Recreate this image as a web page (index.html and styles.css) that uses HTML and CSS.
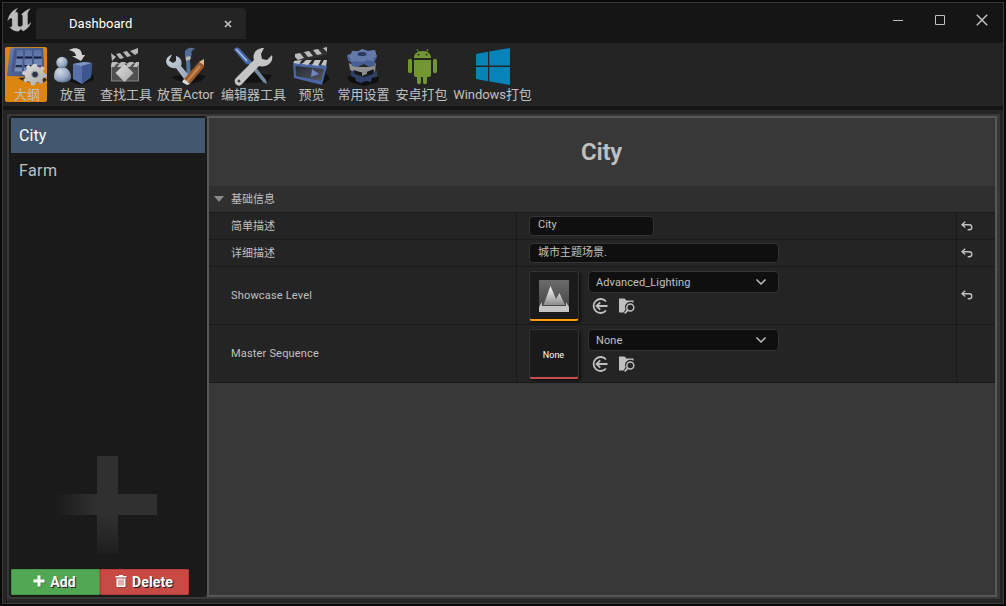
FILE: index.html
```
<!DOCTYPE html>
<html lang="zh-CN">
<head>
<meta charset="utf-8">
<title>Dashboard</title>
<link rel="stylesheet" href="styles.css">
</head>
<body>
<svg width="0" height="0" class="defs">
  <defs>
    <linearGradient id="blue" x1="0" y1="0" x2="1" y2="1"><stop offset="0" stop-color="#6d83b5"/><stop offset="1" stop-color="#344675"/></linearGradient>
    <linearGradient id="cell" x1="0" y1="0" x2="0" y2="1"><stop offset="0" stop-color="#5a70a3"/><stop offset="1" stop-color="#7c90ba"/></linearGradient>
    <linearGradient id="silver" x1="0" y1="0" x2="1" y2="1"><stop offset="0" stop-color="#dedede"/><stop offset="1" stop-color="#a8a8a8"/></linearGradient>
    <linearGradient id="steel" x1="0" y1="0" x2="1" y2="1"><stop offset="0" stop-color="#cbd2d9"/><stop offset="1" stop-color="#8fa0b8"/></linearGradient>
    <radialGradient id="ball" cx=".35" cy=".3" r=".8"><stop offset="0" stop-color="#d0d8e2"/><stop offset=".6" stop-color="#98aac3"/><stop offset="1" stop-color="#566d90"/></radialGradient>
    <linearGradient id="plusfade" gradientUnits="userSpaceOnUse" x1="18" y1="66" x2="50" y2="34"><stop offset="0" stop-color="#1c1c1c"/><stop offset="1" stop-color="#303030"/></linearGradient>
    <linearGradient id="plusleg" x1="0" y1="0" x2="0" y2="1"><stop offset="0" stop-color="#303030"/><stop offset="1" stop-color="#1e1e1e"/></linearGradient>
    <linearGradient id="plusarm" x1="0" y1="0" x2="1" y2="0"><stop offset="0" stop-color="#1b1b1b"/><stop offset="1" stop-color="#303030"/></linearGradient>
    <linearGradient id="thumb" x1="0" y1="0" x2="0" y2="1"><stop offset="0" stop-color="#6b6b6b"/><stop offset="1" stop-color="#3f3f3f"/></linearGradient>
    <linearGradient id="screen" x1="0" y1="0" x2="1" y2="1"><stop offset="0" stop-color="#252a33"/><stop offset="1" stop-color="#515660"/></linearGradient>
    <linearGradient id="peak" x1="0" y1="0" x2="0" y2="1"><stop offset="0" stop-color="#fff"/><stop offset="1" stop-color="#8c8c8c"/></linearGradient>
    <symbol id="undo" viewBox="0 0 12 10"><path d="M4.200.8 1 3.700l3.200 2.800M1.300 3.700h7a2.400 2.400 0 0 1 0 5H6.700" fill="none" stroke="#c0c0c0" stroke-width="1.350"/></symbol>
    <symbol id="chev" viewBox="0 0 12 8"><path d="M1.500 1.500 6 6l4.500-4.500" fill="none" stroke="#c0c0c0" stroke-width="1.500"/></symbol>
    <symbol id="use" viewBox="0 0 16 16"><path d="M14 3.500A7 7 0 1 0 14 12.500M15.500 8H4.500M8.200 4.300 4.500 8l3.700 3.700" fill="none" stroke="#c0c0c0" stroke-width="1.800"/></symbol>
    <symbol id="browse" viewBox="0 0 17 16"><path d="M1 .5h5.500l2 2H15.500v2.300a5.300 5.300 0 0 0-7.900 6.500L5.500 14.500H1z" fill="#c0c0c0"/><circle cx="12.300" cy="9.500" r="3.500" fill="none" stroke="#c0c0c0" stroke-width="1.500"/><path d="m9.700 12.200-3 3.200" stroke="#c0c0c0" stroke-width="1.800"/></symbol>
  </defs>
</svg>
<div class="window">
  <header class="titlebar">
    <svg class="logo" viewBox="0 0 24 24" width="24" height="24"><path d="M10.500.5C5.500 2.200 2 6.500.8 12.500c1.200-1.700 2.400-2.500 3.400-2.500.8 0 1 .5 1 1.500v6.500c0 1-1 1.500-2.500 1 2 2.800 5 4.300 8.800 4.300l2.500-2.500 2 2.200c3.800-1.700 6.800-4.700 7.800-8.500-1.500 2-2.700 2.700-3.300 2.300V6c.2-2 1.300-3.700 2.700-5.200-3.400.9-6 3-8.700 5.700 1 .5 1.300 1 1.300 2V17c-1 1.300-1.800 1.800-3 1.800-1.500 0-2.100-.8-2.100-2.300v-11C10.700 4 9.500 3.700 8 5c.5-2 1.200-3.200 2.500-4.500z" fill="#bcbcbc" stroke="#bcbcbc" stroke-width=".4"/></svg>
    <div class="tab"><span>Dashboard</span><svg width="8" height="8" viewBox="0 0 8 8"><path d="m1 1 6 6m0-6L1 7" stroke="#c0c0c0" stroke-width="1.700"/></svg></div>
    <div class="controls">
      <svg width="12" height="12" viewBox="0 0 12 12"><path d="M1 6.500h10" stroke="#c0c0c0"/></svg>
      <svg width="12" height="12" viewBox="0 0 12 12"><path d="M1.500 1.500h9v9h-9z" fill="none" stroke="#c0c0c0"/></svg>
      <svg width="12" height="12" viewBox="0 0 12 12"><path d="m.8.800 10.400 10.400m0-10.400L.8 11.200" stroke="#c0c0c0" stroke-width="1.500"/></svg>
    </div>
  </header>

  <nav class="toolbar">
    <div class="tool active">
      <svg viewBox="0 0 44 40"><path d="m14 31 25-2 4 4-4 3-18-1z" fill="#3c2a10"/><path d="m6 1.500 4-1L39 1l1 22-4 7-33-1z" fill="url(#blue)"/><path d="M10 1.500 39 1l1 25-33-1z" fill="#465a8b"/><g fill="url(#cell)"><path d="M13 3h6v6h-6.500zM21 3h7v6h-7zM30 3h7l.5 6H30zM12 12h6.500v6h-7zM20.500 12h7.500v6h-7.500zM30 12h8v6h-8zM11 20.500h7v4h-7.500zM20 20.500h8v4h-8z"/></g><path d="M13 10.500h6M21 10.500h7M30 10.500h7.500M12 19h6M20.500 19h7" stroke="#151b35" stroke-width="1.400"/><g transform="translate(31 26.500)"><path d="m-2-11 4 0 .8 3 3 1.200 3-1.800L11.500-6l-1.700 3L11 0l3 .9-.4 3.500-3.600.4-1.500 2.500 1.300 3-3 2-2.800-2.200-3 .8L-.5 14h-4L-5 10.500l-3-1.500-3.500 1.600-2.300-3.100 2.600-2.600-.7-3-3.100-1 .6-3.500 3.300 0 1.800-2.700-1-3.200 3-1.600 2.300 2.200z" transform="scale(.86)" fill="url(#silver)"/><circle cx="0" cy="1" r="3.300" fill="#2b3347" stroke="#9a9a9a"/></g></svg>
      <span>大纲</span>
    </div>
    <div class="tool">
      <svg viewBox="0 0 44 40"><path d="m15 33 15 5 13-5-1-6z" fill="#111"/><path d="M3 30c0-7 3-10 8-10s9 4 9 11c-1 6-17 6-17-1z" fill="url(#ball)"/><circle cx="11" cy="15.500" r="5.700" fill="url(#ball)"/><path d="m22 17 11-2 8 1-1 14-9 7-9-5z" fill="#5870aa"/><path d="m22 17 11-2 8 1-10 3z" fill="#8095c0"/><path d="m31 19 10-3-1 14-9 7z" fill="#3e568f"/><path d="M18 3c7-4 13-1 13 5h3l-4 6-9-5h4c0-3-3-5-7-6z" fill="#d2d2d2"/></svg>
      <span>放置</span>
    </div>
    <div class="tool">
      <svg viewBox="0 0 44 40"><path d="M7.500 16.500h27V34h-27z" fill="#505050" stroke="#858585"/><path d="m7 10 27-7 1 5-27 7z" fill="#292929"/><path d="m7 6 5 4-4 4zM12 7l4-1 4 5-4 1zM19 5l4-1 4 5-4 1zM26 4l8-3v5l-3 2z" fill="#b5b5b5"/><path d="m8 15 6 0-4 5H7zM17 15h5l-4 5h-5zM25 15h5l-4 5h-5zM32 15h3v2l-2 3h-4z" fill="#bcbcbc"/><path d="m20.500 17 9 9-9 9-9-9z" fill="url(#silver)"/></svg>
      <span>查找工具</span>
    </div>
    <div class="tool">
      <svg viewBox="0 0 44 40"><path d="m7 30 20-4 15 3-5 5-13 4z" fill="#121212"/><path d="M22 12h4l1 23h-4z" fill="#54739d"/><path d="M21 4c4-5 9-3 10-2-4 1-4 4-3 6l-5 4c-3-3-2-5-2-8z" fill="#526f9b"/><path d="m21.500 10 5-1 .5 3-5 2z" fill="#b9b9b9"/><path d="M8 7.500c-6 2-8 8-3 12 2 1.500 5 2 7 1.500L23 36l5-4-11-13c2-5-1-9-5-10v5l-3 2-4-2.500z" fill="url(#steel)"/><path d="m34 16 4-3 2 1v6L26 37l-6-5z" fill="#9b5829"/><path d="m35 18 2 2-13 15-2-1z" fill="#c18451"/><path d="m35 15 5-3v6z" fill="#d6bb96"/><path d="m20 32 6 5-3 1-5-3z" fill="#d9dde2"/></svg>
      <span>放置Actor</span>
    </div>
    <div class="tool">
      <svg viewBox="0 0 44 40"><path d="m3 31 16-5 21 2-5 7-20 1z" fill="#121212"/><path d="m15 15 3-2 16 20 1 4-4-2z" fill="#748aa1"/><path d="M2 3c0-3 4-3 6-1l10 11c2 3-2 6-5 3z" fill="#4465a5"/><path d="m4 2 11 12" stroke="#aabce0" stroke-width="1.500"/><path d="M32 1c-8 0-12 6-10 12L4 31c-4 4 2 11 6 6l17-18c8 2 15-4 13-11l-5 5-5-1-1-5z" fill="#c5c5c5"/><circle cx="7" cy="34" r="1.500" fill="#3d3d3d"/></svg>
      <span>编辑器工具</span>
    </div>
    <div class="tool">
      <svg viewBox="0 0 44 40"><path d="m10 32 25-7 5 7-8 6z" fill="#121212"/><path d="m3 15 34 4-5 19-28-7z" fill="#4b66a4"/><path d="m5.500 19 28.500 3-3 12-25-5z" fill="url(#screen)"/><path d="m22 22 7 5-8 3z" fill="#6d86bc"/><path d="M5 7 37 0v8L6 15z" fill="#303030"/><path d="m5 7 5-1 4 5-6 2-3-3zM14 5l5-1 4 5-5 1zM23 3l5-1 4 5-5 1zM33 1l4-1v5z" fill="#bbb"/><path d="m4 14 8-1-3 4-5-1zM16 13l6 0-4 5-6-1zM25 13l6 0-3 6-6-1zM34 13h3l-1 6-5-1z" fill="#c4c4c4"/></svg>
      <span>预览</span>
    </div>
    <div class="tool">
      <svg viewBox="0 0 44 40"><path d="m5 30 8-3 24 3-1 5-14 4-14-4z" fill="#0e0e0e"/><path d="m9 24 5-2h15l6 2v6l-5 1-1 4-5-1-5 2-5-2-1-3-4-2z" fill="#2f3f66"/><path d="m7 16 8 4h13l6-4-1 8-6 1-6 2-8-2-5-2z" fill="#929292"/><path d="m11 23 11 3 10-4-1 5-9 3-9-3z" fill="#151515"/><path d="m20 25 5-1v3l-5 2z" fill="#8a8a8a"/><path d="m5 9 4-1 1-4h7l3-2 6 2 7-1 1 4 1 3-2 4v5l-6 1-5-3-6 3-6-1-1-4-3-1z" fill="#465f93"/><path d="m5 8 4-1 1-3h7l3-2 6 2 7-1 1 4 1 2-3 2-1 3-6-1-4 2-6-1-6 1-1-4z" fill="#6379a7"/><ellipse cx="20" cy="7" rx="4.500" ry="2" fill="#2b3a60"/></svg>
      <span>常用设置</span>
    </div>
    <div class="tool">
      <svg viewBox="0 0 44 40" fill="#709732"><path d="M14 11c0-4 3-7 8.500-7s8.500 3 8.500 7zM14 13h17v15c0 1-1 2-2 2h-2v5c0 3-4 3-4 0v-5h-2v5c0 3-4 3-4 0v-5h-1c-1 0-2-1-2-2zM8 14c0-3 4-3 4 0v10c0 3-4 3-4 0zM33 14c0-3 4-3 4 0v10c0 3-4 3-4 0z"/><path d="m17 2 2 4m9-4-2 4" stroke="#709732"/><circle cx="18.500" cy="7.700" r=".9" fill="#242424"/><circle cx="26.500" cy="7.700" r=".9" fill="#242424"/></svg>
      <span>安卓打包</span>
    </div>
    <div class="tool">
      <svg viewBox="0 0 44 40" fill="#0783b7"><path d="m5 7 12-2.200V18.500H5zM18.200 4.600 39 1v17.500H18.200zM5 20h12v14.200L5 32zM18.200 20H39v18l-20.800-3.600z"/></svg>
      <span>Windows打包</span>
    </div>
  </nav>

  <main class="frame">
    <aside class="sidebar">
      <div class="entry selected">City</div>
      <div class="entry">Farm</div>
      <svg class="bigplus" width="100" height="98" viewBox="0 0 100 98"><path d="M40 0h21v38h39v21H40z" fill="#303030"/><path d="M0 38h40v21H0z" fill="url(#plusarm)"/><path d="M40 59h21v39H40z" fill="url(#plusleg)"/></svg>
      <div class="buttons">
        <button class="btn add"><svg width="12" height="12" viewBox="0 0 12 12"><path d="M4.500.5h3v4h4v3h-4v4h-3v-4h-4v-3h4z" fill="#fff"/></svg>Add</button>
        <button class="btn delete"><svg width="12" height="12" viewBox="0 0 12 12"><path d="M4 1V0h4v1h3.500v1.500H.5V1zM1.500 3.500h9V11a1 1 0 0 1-1 1h-7a1 1 0 0 1-1-1z" fill="#fff"/><path d="M4 4.500v6m2-6v6m2-6v6" stroke="#c74a45" stroke-width=".9"/></svg>Delete</button>
      </div>
    </aside>
    <section class="details">
      <h1>City</h1>
      <div class="category"><svg width="10" height="6" viewBox="0 0 10 6"><path d="M0 0h10L5 6z" fill="#8a8a8a"/></svg><span class="zh">基础信息</span></div>
      <div class="row"><div class="name zh">简单描述</div><div class="value"><div class="field short">City</div></div><div class="reset"><svg width="12" height="10"><use href="#undo"/></svg></div></div>
      <div class="row"><div class="name zh">详细描述</div><div class="value"><div class="field">城市主题场景.</div></div><div class="reset"><svg width="12" height="10"><use href="#undo"/></svg></div></div>
      <div class="row tall"><div class="name">Showcase Level</div><div class="value">
        <div class="thumb level"><svg width="30" height="32" viewBox="0 0 30 32"><path d="M0 0h30v32H0z" fill="url(#thumb)"/><path d="m4.500 25 7-19 5.500 13 3.500-6L26 25z" fill="url(#peak)"/><path d="m0 27 3-5v4h24v-4l3 5v5H0z" fill="#c4c4c4"/></svg></div>
        <div class="asset"><div class="combo"><span>Advanced_Lighting</span><svg width="12" height="8"><use href="#chev"/></svg></div><div class="actions"><svg width="16" height="16"><use href="#use"/></svg><svg width="17" height="16"><use href="#browse"/></svg></div></div>
      </div><div class="reset"><svg width="12" height="10"><use href="#undo"/></svg></div></div>
      <div class="row tall"><div class="name">Master Sequence</div><div class="value">
        <div class="thumb sequence"><span>None</span></div>
        <div class="asset"><div class="combo"><span>None</span><svg width="12" height="8"><use href="#chev"/></svg></div><div class="actions"><svg width="16" height="16"><use href="#use"/></svg><svg width="17" height="16"><use href="#browse"/></svg></div></div>
      </div><div class="reset"></div></div>
    </section>
  </main>
</div>
</body>
</html>
```

FILE: styles.css
```
* { box-sizing: border-box; }
body {
  margin: 0;
  padding: 2px;
  height: 606px;
  overflow: hidden;
  background: #080808;
  font-family: Roboto, "Noto Sans CJK SC", sans-serif;
  color: #c0c0c0;
}
svg { display: block; flex: none; }
.defs { position: absolute; }
.window {
  width: 1002px;
  height: 602px;
  border: 1px solid #383838;
  background: #242424;
  display: flex;
  flex-direction: column;
}
.titlebar {
  height: 40px;
  flex: none;
  background: #151515;
  display: flex;
  padding: 5px 15px 0 4px;
}
.tab {
  width: 210px;
  height: 31px;
  margin-left: 5px;
  padding: 0 14px 0 33px;
  border-radius: 4px 4px 0 0;
  background: #242424;
  color: #fff;
  font-size: 13px;
  letter-spacing: .05px;
  display: flex;
  align-items: center;
  justify-content: space-between;
}
.controls { display: flex; gap: 30px; margin: 6px 0 0 auto; }
.toolbar {
  height: 67px;
  flex: none;
  border-bottom: 4px solid #151515;
  padding: 4px 0 0 2px;
  display: grid;
  grid-template-columns: 43px 50px 56px 63px 73px 43px 61px 55px 87px;
}
.tool {
  height: 55px;
  display: flex;
  flex-direction: column;
  align-items: center;
  font-size: 13px;
  line-height: 16px;
  letter-spacing: -.05px;
  white-space: nowrap;
}
.tool svg { width: 44px; height: 40px; }
.tool.active { width: 42px; background: #dc860f; border-radius: 2px; }
.tool.active span { padding-left: 2px; }
.frame {
  flex: 1;
  margin: 4px 3px 4px 4px;
  border: 2px solid #383838;
  background: #383838;
  display: grid;
  grid-template-columns: 198px 790px;
}
.sidebar {
  border-radius: 4px;
  background: #1a1a1a;
  padding: 2px;
  display: flex;
  flex-direction: column;
}
.entry {
  height: 35px;
  line-height: 35px;
  padding-left: 8px;
  font-size: 16px;
  letter-spacing: .4px;
}
.entry.selected { background: #42586f; color: #fff; letter-spacing: .1px; }
.bigplus { margin: auto 0 15px 46px; }
.buttons { display: flex; }
.btn {
  height: 26px;
  border: 1px solid #459748;
  border-radius: 1px;
  padding: 0 2px 0 0;
  color: #fff;
  font: bold 14px Roboto, sans-serif;
  letter-spacing: .1px;
  text-shadow: 1px 1px #222;
  display: flex;
  align-items: center;
  justify-content: center;
  gap: 5px;
}
.btn svg { margin-top: -2px; filter: drop-shadow(1px 1px 0 #2224); }
.add { width: 89px; background: #52a852; }
.delete { width: 89px; background: #c74a45; border-color: #b63b37; padding-right: 1px; }
.details { border: 2px solid #575757; background: #383838; }
h1 {
  margin: 0;
  padding-right: 1px;
  height: 68px;
  line-height: 68px;
  text-align: center;
  font-size: 24px;
  font-weight: 600;
  letter-spacing: -.2px;
}
.category {
  height: 27px;
  border-bottom: 1px solid #1a1a1a;
  background: #2f2f2f;
  padding-left: 5px;
  display: flex;
  align-items: center;
  gap: 7px;
  font-size: 11px;
}
.zh { padding-bottom: 2px; }
.row {
  height: 27px;
  border-bottom: 1px solid #1a1a1a;
  background: #242424;
  display: grid;
  grid-template-columns: 308px 440px 38px;
  font-size: 11px;
}
.row.tall { height: 58px; }
.name { padding-left: 22px; border-right: 1px solid #1a1a1a; display: flex; align-items: center; letter-spacing: .18px; }
.name.zh { letter-spacing: 0; }
.value { padding-left: 12px; border-right: 1px solid #1a1a1a; display: flex; align-items: center; }
.reset { display: flex; align-items: center; padding: 0 0 1px 4px; }
.field, .combo {
  border: 1px solid #343434;
  border-radius: 4px;
  background: #0f0f0f;
}
.field { width: 250px; height: 20px; line-height: 17px; padding-left: 8px; }
.field.short { width: 125px; line-height: 16px; }
.thumb {
  width: 50px;
  height: 50px;
  border: 1px solid #333;
  border-bottom: 2px solid #ff9c0c;
  border-radius: 3px;
  background: #1a1a1a;
  box-shadow: 2px 2px 3px #111;
  display: flex;
  align-items: center;
  justify-content: center;
}
.thumb.level svg { margin-top: 1px; }
.thumb.sequence { border-bottom-color: #c74e4e; color: #fff; font-size: 9px; }
.thumb.sequence span { padding: 3px 1px 0 0; }
.asset { margin-left: 9px; }
.combo {
  width: 191px;
  height: 22px;
  padding: 0 11px 0 7px;
  display: flex;
  align-items: center;
  justify-content: space-between;
  letter-spacing: .1px;
}
.combo span { padding-top: 2px; }
.actions { display: flex; gap: 10px; padding: 5px 0 7px 4px; }
```
